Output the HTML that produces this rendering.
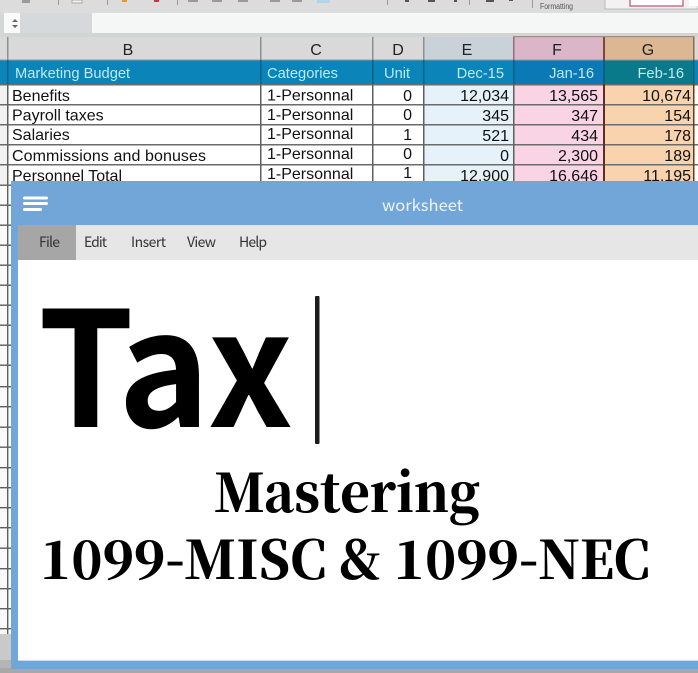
<!DOCTYPE html>
<html><head><meta charset="utf-8"><style>
html,body{margin:0;padding:0;background:#fff}
svg{display:block;filter:blur(.35px)}
text{font-family:"Liberation Sans",sans-serif}
.c{font-size:16px;fill:#111}
.h{font-size:14.7px;fill:#bdeaf4}
.l{font-size:16px;fill:#222;text-anchor:middle}
.r{text-anchor:end}
.m{font-size:14px;fill:#333;font-family:"Noto Sans CJK SC","Liberation Sans",sans-serif}
.t{font-size:160px;font-weight:700;fill:#000;font-family:"Noto Sans CJK SC","Liberation Sans",sans-serif}
.s{font-family:"Noto Serif CJK SC","Liberation Serif",serif;font-weight:900;fill:#000;font-size:53px}
</style></head><body>
<svg width="698" height="673" viewBox="0 0 698 673" xmlns="http://www.w3.org/2000/svg">
<rect width="698" height="673" fill="#fff"/>
<!-- ribbon -->
<rect width="698" height="13" fill="#dcdcdc"/>
<rect y="13" width="698" height="20" fill="#f5f7f7"/>
<rect y="13" width="4" height="20" fill="#d5d8d8"/>
<rect x="4" y="13" width="16" height="20" fill="#fafafa"/>
<rect x="20" y="13" width="72" height="20" fill="#d5d9db"/>
<rect y="33" width="698" height="4" fill="#d3d5d5"/>
<path d="M12 22l3-3 3 3z M12 25l3 3 3-3z" fill="#666"/>
<g fill="#9a9a9a">
<rect x="188" y="0" width="10" height="2"/><rect x="212" y="0" width="10" height="2"/><rect x="238" y="0" width="10" height="2"/><rect x="270" y="0" width="10" height="2"/><rect x="292" y="0" width="10" height="2"/>
<rect x="22" y="0" width="8" height="3"/>
<rect x="58" y="0" width="1" height="5"/><rect x="107" y="0" width="1" height="5"/><rect x="177" y="0" width="1" height="5"/><rect x="387" y="0" width="1" height="5"/><rect x="469" y="0" width="1" height="5"/><rect x="532" y="0" width="1" height="8"/>
</g>
<rect x="72" y="0" width="10" height="3" fill="#f3f3f3" stroke="#aaa"/>
<rect x="122" y="0" width="5" height="2" fill="#e8952b"/>
<rect x="154" y="0" width="5" height="2" fill="#d8303a"/>
<rect x="317" y="0" width="13" height="3" fill="#b5d3e8"/>
<g fill="#555">
<rect x="405" y="0" width="4" height="2"/><rect x="428" y="0" width="7" height="2"/><rect x="454" y="0" width="3" height="2"/><rect x="486" y="0" width="8" height="2"/><rect x="509" y="0" width="4" height="1"/>
</g>
<text x="540" y="9" font-size="8" fill="#555" textLength="33" lengthAdjust="spacingAndGlyphs">Formatting</text>
<path d="M605 0v9h93V0" fill="#f2f2f2" stroke="#b9b9b9"/>
<rect x="630" y="-2" width="53" height="8" fill="#fff" stroke="#b65268" stroke-width="1.2"/>
<rect x="689" y="0" width="9" height="6" fill="#fff"/>
<!-- column headers -->
<rect y="37" width="698" height="23" fill="#d9d9d9"/>
<rect x="423" y="37" width="90" height="23" fill="#c9d2d9"/>
<rect x="513" y="36" width="90" height="24" fill="#dbb6c8"/>
<rect x="603" y="36" width="90" height="24" fill="#dcb793"/>
<!-- blue -->
<rect y="60" width="698" height="24" fill="#0a84b9"/>
<rect x="513" y="60" width="90" height="24" fill="#0a79b5"/>
<rect x="603" y="60" width="90" height="24" fill="#097a8a"/>
<!-- body cells -->
<rect x="423" y="84" width="90" height="100" fill="#e5f2fa"/>
<rect x="513" y="84" width="90" height="100" fill="#f9d4e5"/>
<rect x="603" y="84" width="90" height="100" fill="#f9d3ad"/>
<rect x="0" y="84" width="7" height="100" fill="#f2f2f2"/>
<!-- grid horizontals -->
<g fill="#6b6b6b">
<rect y="84" width="698" height="1.5"/><rect y="104" width="698" height="1.5"/><rect y="124" width="698" height="1.5"/><rect y="144" width="698" height="1.5"/><rect y="164" width="698" height="1.5"/>
</g>
<rect y="59.5" width="698" height="1" fill="#8a9aa3"/>
<!-- grid verticals -->
<g fill="#8f8f8f">
<rect x="7" y="37" width="1.5" height="23"/><rect x="260" y="37" width="1.5" height="23"/><rect x="372" y="37" width="1.5" height="23"/><rect x="423" y="37" width="1.5" height="23"/>
</g>
<rect x="513" y="36" width="1.5" height="24" fill="#9a6a80"/>
<rect x="603" y="36" width="2" height="24" fill="#7c4a3a"/>
<rect x="693" y="36" width="1.5" height="24" fill="#8f6d4a"/>
<rect x="513" y="36" width="181" height="1.2" fill="#a58a80"/>
<g fill="#0b5f86">
<rect x="7" y="60" width="1.5" height="24"/><rect x="260" y="60" width="1.5" height="24"/><rect x="372" y="60" width="1.5" height="24"/><rect x="423" y="60" width="1.5" height="24"/><rect x="513" y="60" width="1.5" height="24"/><rect x="603" y="60" width="2" height="24"/><rect x="693" y="60" width="1.5" height="24"/>
</g>
<g fill="#5f5f5f">
<rect x="7" y="84" width="1.5" height="100"/><rect x="260" y="84" width="1.5" height="100"/><rect x="372" y="84" width="1.5" height="100"/><rect x="423" y="84" width="1.5" height="100"/><rect x="513" y="84" width="1.5" height="100"/>
</g>
<rect x="603" y="84" width="2" height="100" fill="#5b2f25"/>
<rect x="693" y="84" width="1.5" height="100" fill="#5b3f25"/>
<!-- letters -->
<text class="l" x="128" y="55">B</text><text class="l" x="316" y="55">C</text><text class="l" x="398" y="55">D</text><text class="l" x="467" y="55">E</text><text class="l" x="557" y="55">F</text><text class="l" x="648" y="55">G</text>
<!-- head -->
<text class="h" x="15" y="78">Marketing Budget</text>
<text class="h" x="267" y="78">Categories</text>
<text class="h" x="384" y="78">Unit</text>
<text class="h r" x="504" y="78">Dec-15</text>
<text class="h r" x="594" y="78">Jan-16</text>
<text class="h r" x="684" y="78">Feb-16</text>
<!-- rows -->
<text class="c" x="12" y="101">Benefits</text>
<text class="c" x="12" y="120.5">Payroll taxes</text>
<text class="c" x="12" y="140">Salaries</text>
<text class="c" x="12" y="161" textLength="194">Commissions and bonuses</text>
<text class="c" x="12" y="181">Personnel Total</text>
<g class="c">
<text class="c" x="267" y="100.5">1-Personnal</text><text class="c" x="267" y="120">1-Personnal</text><text class="c" x="267" y="139">1-Personnal</text><text class="c" x="267" y="159">1-Personnal</text><text class="c" x="267" y="179">1-Personnal</text>
<text class="c r" x="412" y="101">0</text><text class="c r" x="412" y="120">0</text><text class="c r" x="412" y="140">1</text><text class="c r" x="412" y="159">0</text><text class="c r" x="412" y="178">1</text>
<text class="c r" x="509" y="101">12,034</text><text class="c r" x="509" y="121">345</text><text class="c r" x="509" y="141">521</text><text class="c r" x="509" y="161">0</text><text class="c r" x="509" y="181">12,900</text>
<text class="c r" x="598" y="101">13,565</text><text class="c r" x="598" y="121">347</text><text class="c r" x="598" y="141">434</text><text class="c r" x="598" y="161">2,300</text><text class="c r" x="598" y="181">16,646</text>
<text class="c r" x="691" y="101">10,674</text><text class="c r" x="691" y="121">154</text><text class="c r" x="691" y="141">178</text><text class="c r" x="691" y="161">189</text><text class="c r" x="691" y="181">11,195</text>
</g>
<!-- left sliver grid -->
<rect x="0" y="184" width="11" height="451" fill="#fafafa"/>
<g fill="#5f5f5f">
<rect x="0" y="184.500" width="11" height="1.4"/><rect x="0" y="204.500" width="11" height="1.4"/><rect x="0" y="224.500" width="11" height="1.4"/><rect x="0" y="244.500" width="11" height="1.4"/><rect x="0" y="264.500" width="11" height="1.4"/><rect x="0" y="284.500" width="11" height="1.4"/>
<rect x="0" y="304.500" width="11" height="1.4"/><rect x="0" y="324.500" width="11" height="1.4"/><rect x="0" y="344.500" width="11" height="1.4"/><rect x="0" y="364.500" width="11" height="1.4"/><rect x="0" y="386" width="11" height="1.4"/><rect x="0" y="406" width="11" height="1.4"/>
<rect x="0" y="426.500" width="11" height="1.4"/><rect x="0" y="446.500" width="11" height="1.4"/><rect x="0" y="467" width="11" height="1.4"/><rect x="0" y="487" width="11" height="1.4"/><rect x="0" y="507" width="11" height="1.4"/><rect x="0" y="527" width="11" height="1.4"/>
<rect x="0" y="547.500" width="11" height="1.4"/><rect x="0" y="568" width="11" height="1.4"/><rect x="0" y="588" width="11" height="1.4"/><rect x="0" y="608" width="11" height="1.4"/><rect x="0" y="628" width="11" height="1.4"/>
<rect x="7" y="184" width="1.4" height="450"/>
</g>
<rect x="0" y="634" width="11" height="39" fill="#c9c9c9"/>
<rect x="0" y="660" width="11" height="13" fill="#b5b5b5"/>
<rect x="0" y="668" width="698" height="5" fill="#a8a8a8"/>
<!-- window -->
<rect x="11" y="181" width="687" height="488" fill="#72a6d9"/>
<rect x="18" y="225" width="680" height="35" fill="#e6e6e6"/>
<rect x="18" y="225" width="58" height="35" fill="#a6a6a6"/>
<rect x="18" y="260" width="680" height="400" fill="#fff"/>
<rect x="18" y="660" width="680" height="1" fill="#c9def2"/>
<g fill="#fff">
<rect x="23" y="196.500" width="25" height="3" rx="1.500"/><rect x="23" y="202" width="25" height="3" rx="1.500"/><rect x="23" y="208" width="19" height="3" rx="1.500"/>
</g>
<text x="382" y="211" font-size="16" fill="#eef4fb" style="font-family:'Noto Sans CJK SC','Liberation Sans',sans-serif" textLength="81" lengthAdjust="spacingAndGlyphs">worksheet</text>
<text class="m" x="39" y="247" textLength="21">File</text>
<text class="m" x="84" y="247" textLength="23">Edit</text>
<text class="m" x="131" y="247" textLength="35">Insert</text>
<text class="m" x="187" y="247" textLength="29">View</text>
<text class="m" x="239" y="247" textLength="28">Help</text>
<!-- title -->
<text class="t" x="38" y="427" textLength="96" lengthAdjust="spacingAndGlyphs">T</text><text class="t" x="118" y="427" textLength="92" lengthAdjust="spacingAndGlyphs">a</text><text class="t" x="208" y="427" textLength="85" lengthAdjust="spacingAndGlyphs">x</text>
<rect x="315" y="296" width="4.500" height="148" rx="1" fill="#1c1c1c"/>
<text class="s" x="214" y="512" textLength="266" lengthAdjust="spacingAndGlyphs">Mastering</text>
<text class="s" x="40" y="579" textLength="610" lengthAdjust="spacingAndGlyphs">1099-MISC &amp; 1099-NEC</text>
</svg>
</body></html>
